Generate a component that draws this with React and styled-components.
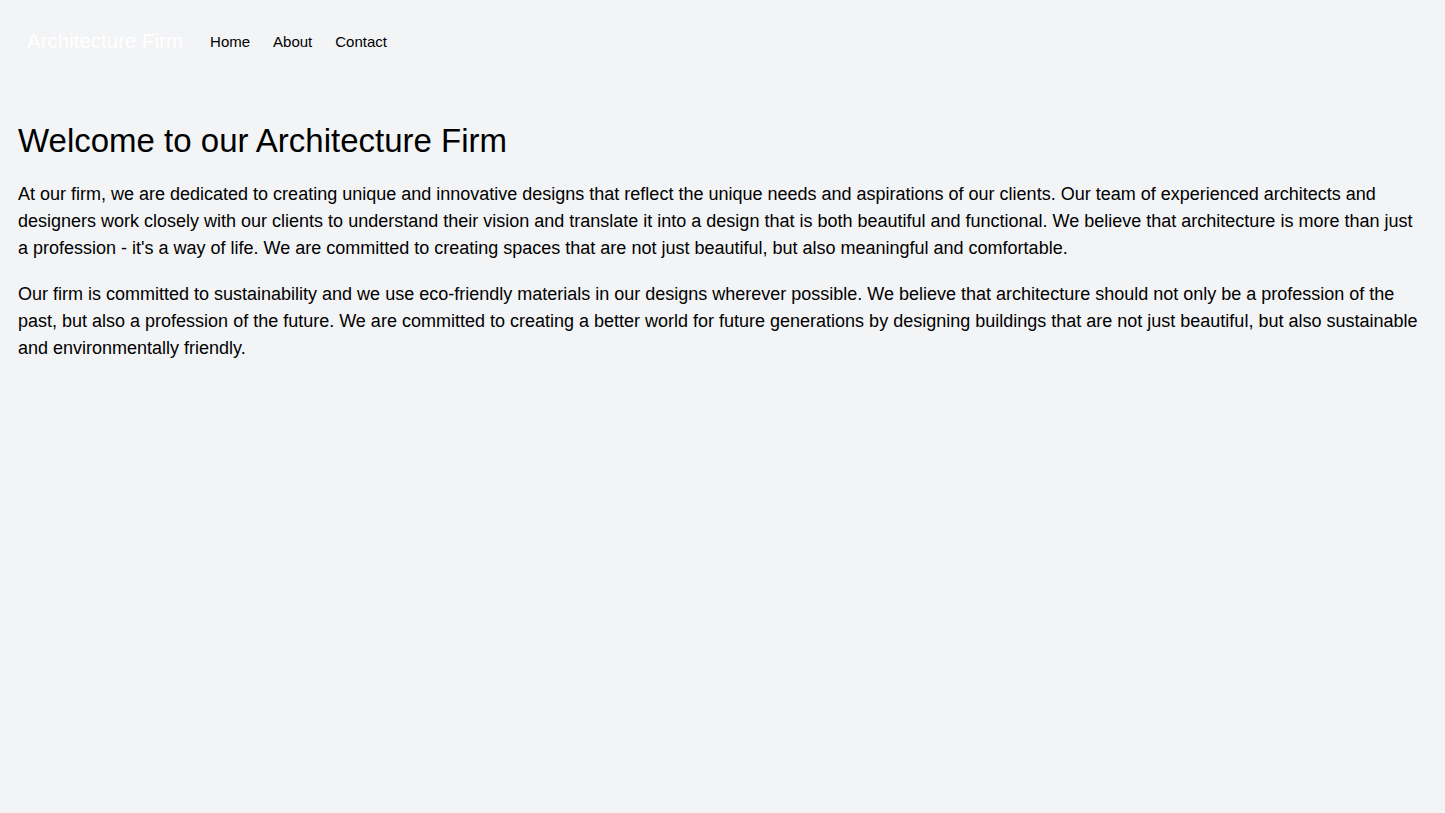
import React from "react";
import styled, { createGlobalStyle } from "styled-components";

const Global = createGlobalStyle`
  html, body {
    margin: 0;
    padding: 0;
    background: #f3f4f6;
    font-family: "Liberation Sans", Arial, sans-serif;
    color: #000;
  }
`;

const App = () => {
  return (
    <Page>
      <Global />
      <Nav>
        <Brand>Architecture Firm</Brand>
        <Links>
          <a href="#">Home</a>
          <a href="#">About</a>
          <a href="#">Contact</a>
        </Links>
      </Nav>
      <Main>
        <Title>Welcome to our Architecture Firm</Title>
        <Text>
          At our firm, we are dedicated to creating unique and innovative
          designs that reflect the unique needs and aspirations of our clients.
          Our team of experienced architects and designers work closely with
          our clients to understand their vision and translate it into a design
          that is both beautiful and functional. We believe that architecture is
          more than just a profession - it's a way of life. We are committed to
          creating spaces that are not just beautiful, but also meaningful and
          comfortable.
        </Text>
        <Text>
          Our firm is committed to sustainability and we use eco-friendly
          materials in our designs wherever possible. We believe that
          architecture should not only be a profession of the past, but also a
          profession of the future. We are committed to creating a better world
          for future generations by designing buildings that are not just
          beautiful, but also sustainable and environmentally friendly.
        </Text>
      </Main>
    </Page>
  );
};

export default App;

const Page = styled.div`
  min-height: 813px;
  background: #f3f4f6;
`;

const Nav = styled.nav`
  display: flex;
  align-items: center;
  height: 82px;
  padding: 0 27px;
`;

const Brand = styled.div`
  color: #fff;
  font-size: 20.5px;
  margin-right: 27px;
`;

const Links = styled.div`
  display: flex;
  gap: 23px;
  a {
    color: #000;
    text-decoration: none;
    font-size: 15px;
  }
`;

const Main = styled.main`
  padding: 38px 18px 0;
`;

const Title = styled.h1`
  margin: 0 0 20px;
  font-size: 33px;
  font-weight: 400;
  line-height: 1.25;
`;

const Text = styled.p`
  margin: 0 0 19px;
  font-size: 18px;
  line-height: 27px;
`;
